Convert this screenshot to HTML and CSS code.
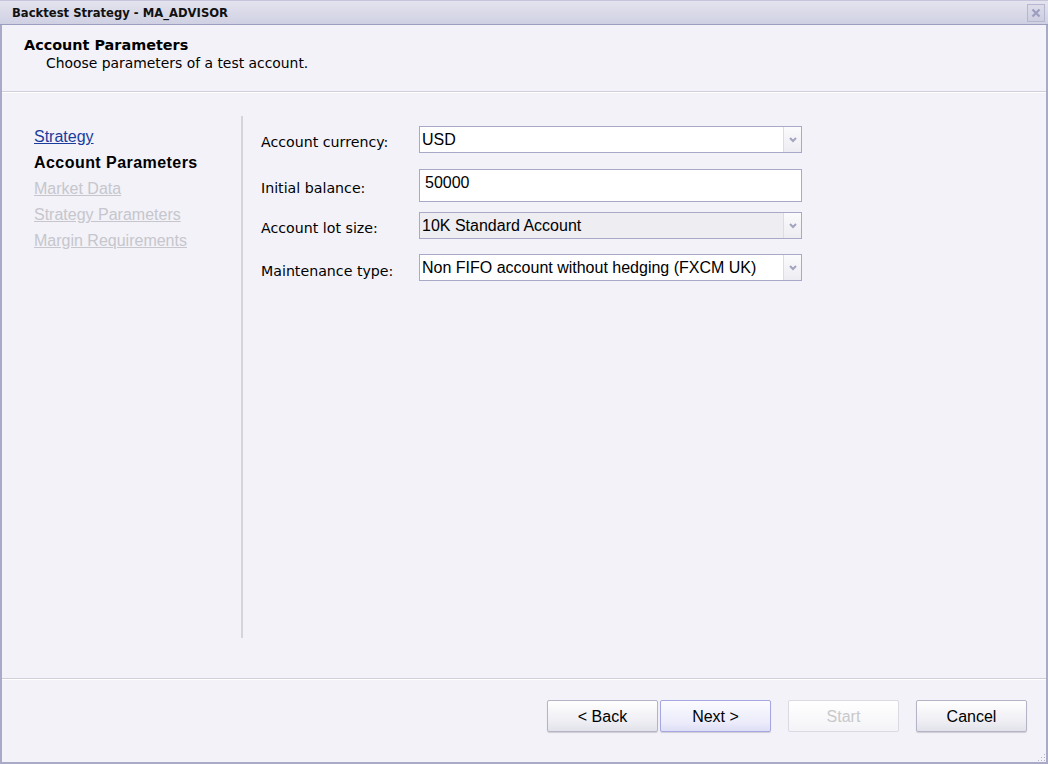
FILE: index.html
```html
<!DOCTYPE html>
<html>
<head>
<meta charset="utf-8">
<link rel="stylesheet" href="styles.css">
</head>
<body>
<div class="window">
  <div class="titlebar">
    <span class="title">Backtest Strategy - MA_ADVISOR</span>
    <span class="close"><svg width="10" height="10" viewBox="0 0 10 10"><path d="M1.5 1.5 L8.5 8.5 M8.5 1.5 L1.5 8.5" stroke="#9c9dbf" stroke-width="2.2"/></svg></span>
  </div>
  <div class="header">
    <div class="h-title">Account Parameters</div>
    <div class="h-sub">Choose parameters of a test account.</div>
  </div>
  <div class="main">
    <nav class="nav">
      <a class="nav-link">Strategy</a>
      <span class="nav-active">Account Parameters</span>
      <span class="nav-disabled">Market Data</span>
      <span class="nav-disabled">Strategy Parameters</span>
      <span class="nav-disabled">Margin Requirements</span>
    </nav>
    <div class="divider"></div>
    <div class="form">
      <div class="row r1">
        <label class="lbl">Account currency:</label>
        <div class="select"><span class="val">USD</span><span class="drop"><svg width="8" height="6" viewBox="0 0 8 6"><path d="M1 1 L4 4 L7 1" stroke="#a3a4c0" stroke-width="2" fill="none"/></svg></span></div>
      </div>
      <div class="row r2">
        <label class="lbl">Initial balance:</label>
        <div class="input"><span class="val">50000</span></div>
      </div>
      <div class="row r3">
        <label class="lbl">Account lot size:</label>
        <div class="select gray"><span class="val">10K Standard Account</span><span class="drop"><svg width="8" height="6" viewBox="0 0 8 6"><path d="M1 1 L4 4 L7 1" stroke="#a3a4c0" stroke-width="2" fill="none"/></svg></span></div>
      </div>
      <div class="row r4">
        <label class="lbl">Maintenance type:</label>
        <div class="select"><span class="val">Non FIFO account without hedging (FXCM UK)</span><span class="drop"><svg width="8" height="6" viewBox="0 0 8 6"><path d="M1 1 L4 4 L7 1" stroke="#a3a4c0" stroke-width="2" fill="none"/></svg></span></div>
      </div>
    </div>
  </div>
  <div class="footer">
    <button class="btn">&lt; Back</button>
    <button class="btn next">Next &gt;</button>
    <button class="btn disabled">Start</button>
    <button class="btn">Cancel</button>
  </div>
  <div class="grip"></div>
</div>
</body>
</html>
```
FILE: styles.css
```css
* { box-sizing: border-box; }
html, body { margin: 0; padding: 0; }
body { width: 1048px; height: 764px; overflow: hidden; background: #f2f2f8; }
.window {
  position: relative;
  width: 1048px; height: 764px;
  border-left: 2px solid #a8aac8;
  border-right: 2px solid #a8aac8;
  border-bottom: 2px solid #a8aac8;
  background: #f2f2f8;
  display: flex; flex-direction: column;
}
.titlebar {
  height: 25px;
  margin-left: -2px; margin-right: -2px;
  background: linear-gradient(#e4e4ef, #cfd0e2);
  border-top: 1px solid #c4c5da;
  border-bottom: 1px solid #9c9ec0;
  display: flex; align-items: center; justify-content: space-between;
  padding-left: 12px; padding-right: 3px;
}
.title { font-family: "DejaVu Sans", Verdana, sans-serif; font-weight: bold; font-size: 11.6px; color: #111; }
.close {
  width: 18px; height: 18px;
  border: 1px solid #b5b7d0;
  display: flex; align-items: center; justify-content: center;
  background: linear-gradient(#dcdcea, #cdcee0);
}
.header {
  height: 67px;
  padding: 12px 0 0 22px;
  border-bottom: 1px solid #d0d0dc;
  box-shadow: 0 1px 0 #ffffff;
}
.h-title { font-family: "DejaVu Sans", Tahoma, sans-serif; font-weight: bold; font-size: 14.4px; color: #000; line-height: 17px; }
.h-sub { font-family: "DejaVu Sans", Tahoma, sans-serif; font-size: 13.9px; color: #000; padding-left: 22px; line-height: 19px; }
.main {
  flex: 1;
  display: flex;
  padding-top: 24px;
}
.nav {
  width: 239px;
  padding-left: 32px;
  padding-top: 8px;
  display: flex; flex-direction: column;
  font-family: "Liberation Sans", Arial, sans-serif; font-size: 16px;
}
.nav > * { height: 26px; line-height: 26px; }
.nav-link { color: #1a3c9c; text-decoration: underline; }
.nav-active { color: #000; font-weight: bold; letter-spacing: 0.45px; }
.nav-disabled { color: #c6c6cc; text-decoration: underline; }
.divider { width: 2px; height: 522px; background: #d4d4dc; }
.form { flex: 1; padding-left: 18px; padding-top: 10px; }
.row { display: flex; align-items: center; }
.lbl { width: 158px; font-family: "DejaVu Sans", Tahoma, sans-serif; font-size: 14.2px; color: #000; padding-top: 5px; }
.r1 { height: 27px; }
.r2 { height: 33px; margin-top: 16px; }
.r3 { height: 27px; margin-top: 10px; }
.r4 { height: 27px; margin-top: 15px; }
.r4 .lbl { padding-top: 7px; }
.select, .input {
  width: 383px; height: 100%;
  border: 1px solid #a8a9c6;
  background: #fff;
  display: flex; align-items: center;
  font-family: "Liberation Sans", Arial, sans-serif; font-size: 16px; color: #000;
}
.select.gray { background: #ededf2; }
.val { flex: 1; padding-left: 2px; white-space: nowrap; overflow: hidden; }
.input .val { align-self: flex-start; padding-top: 4px; padding-left: 5px; }
.drop {
  width: 18px; height: 100%;
  border-left: 1px solid #dcdce6;
  background: linear-gradient(#fbfbfd, #ececf2);
  display: flex; align-items: center; justify-content: center;
}
.footer {
  height: 84px;
  border-top: 1px solid #d0d0dc;
  box-shadow: inset 0 1px 0 #ffffff;
  display: flex; align-items: flex-start;
  padding-top: 21px; padding-left: 545px;
}
.btn {
  width: 111px; height: 32px;
  border: 1px solid #b4b4c6;
  border-radius: 2px;
  background: linear-gradient(#ffffff, #ededf3 70%, #e2e2ea);
  font-family: "Liberation Sans", Arial, sans-serif; font-size: 16px; color: #000;
  padding: 2px 0 0 0; margin-right: 2px;
  box-shadow: 0 1px 1px rgba(0,0,0,0.15);
}
.btn.next { border-color: #a6a6e0; background: linear-gradient(#fbfbff, #ececfb 70%, #dedef6); margin-right: 17px; }
.btn.disabled { color: #c8c8ca; border-color: #dadae2; background: linear-gradient(#ffffff, #f4f4f8); box-shadow: none; margin-right: 17px; }
.grip {
  position: absolute; right: 1px; bottom: 1px;
  width: 8px; height: 8px;
  background-image: radial-gradient(circle, #b0b2cc 0.8px, transparent 1px);
  background-size: 3px 3px;
  clip-path: polygon(100% 0, 100% 100%, 0 100%);
}
```
